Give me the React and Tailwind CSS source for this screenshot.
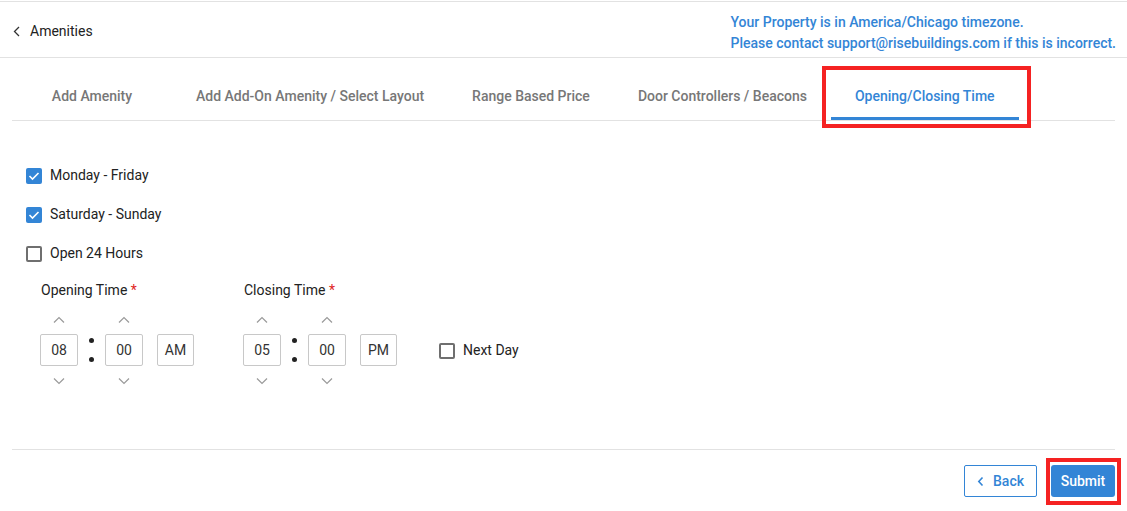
import { useState } from "react";

const BLUE = "#3385d6";

const Chevron = ({ dir = "up", className = "" }) => (
  <svg width="12" height="7" viewBox="0 0 12 7" className={className} fill="none">
    {dir === "up" ? (
      <path d="M1 6.5 L6 1.5 L11 6.5" stroke="#9a9a9a" strokeWidth="1.2" />
    ) : (
      <path d="M1 0.5 L6 5.5 L11 0.5" stroke="#9a9a9a" strokeWidth="1.2" />
    )}
  </svg>
);

const Check = ({ checked, label, onClick }) => (
  <div className="flex items-center h-[39px] cursor-pointer" onClick={onClick}>
    {checked ? (
      <span className="w-4 h-4 rounded-[2px] bg-[#3385d6] flex items-center justify-center">
        <svg width="12" height="10" viewBox="0 0 12 10" fill="none">
          <path d="M1.5 5 L4.5 8 L10.5 2" stroke="white" strokeWidth="1.6" />
        </svg>
      </span>
    ) : (
      <span className="w-4 h-4 rounded-[2px] border-2 border-[#6f6f6f]" />
    )}
    <span className="ml-[8px] text-[14px] text-[#222]">{label}</span>
  </div>
);

const Spin = ({ value }) => (
  <div className="flex flex-col items-center">
    <button className="h-5 w-[38px] flex items-center justify-center"><Chevron dir="up" /></button>
    <div className="mt-[5px] w-[38px] h-[32px] border border-[#c8c8c8] rounded-[2px] flex items-center justify-center text-[14px] text-[#333]">{value}</div>
    <button className="mt-[5px] h-5 w-[38px] flex items-center justify-center"><Chevron dir="down" /></button>
  </div>
);

const TimePicker = ({ label, h, m, ap }) => (
  <div>
    <div className="pl-px text-[14px] leading-5 text-[#222]">
      {label} <span className="text-[#e02424]">*</span>
    </div>
    <div className="mt-[9px] flex items-center">
      <Spin value={h} />
      <div className="w-[27px] flex flex-col items-center gap-[14px]">
        <span className="w-[5px] h-[5px] rounded-full bg-[#222]" />
        <span className="w-[5px] h-[5px] rounded-full bg-[#222]" />
      </div>
      <Spin value={m} />
      <div className="ml-[14px] w-[37px] h-[32px] border border-[#c8c8c8] rounded-[2px] flex items-center justify-center text-[14px] text-[#333]">{ap}</div>
    </div>
  </div>
);

const tabs = [
  "Add Amenity",
  "Add Add-On Amenity / Select Layout",
  "Range Based Price",
  "Door Controllers / Beacons",
  "Opening/Closing Time",
];

export default function App() {
  const [checks, setChecks] = useState({ week: true, weekend: true, allDay: false, nextDay: false });
  const toggle = (k) => setChecks((c) => ({ ...c, [k]: !c[k] }));

  return (
    <div className="w-[1127px] h-[511px] bg-white font-['Roboto',sans-serif] overflow-hidden">
      <div className="mt-px border-t border-[#e2e2e2]" />
      <div className="h-[56px] flex justify-between border-b border-[#e2e2e2]">
        <div className="flex items-center pl-[13px] pt-[3px]">
          <svg width="7" height="11" viewBox="0 0 7 11" fill="none">
            <path d="M6 1 L1.5 5.5 L6 10" stroke="#333" strokeWidth="1.3" />
          </svg>
          <span className="ml-[10px] text-[14px] text-[#222]">Amenities</span>
        </div>
        <div className="pt-[10px] pr-[11px] text-left text-[14px] leading-[21px] font-medium text-[#3385d6]">
          <div>Your Property is in America/Chicago timezone.</div>
          <div>Please contact support@risebuildings.com if this is incorrect.</div>
        </div>
      </div>

      <div className="mx-3 mt-[10px] flex border-b border-[#e2e2e2]">
        {tabs.map((t, i) => {
          const active = i === tabs.length - 1;
          return (
            <div
              key={t}
              className={
                "relative min-w-[160px] px-6 h-[52px] flex items-end justify-center pb-[11px] text-[14px] leading-5 font-medium border-b-[3px] " +
                (active ? "text-[#3385d6] border-[#3385d6]" : "text-[#777] border-transparent")
              }
            >
              {t}
              {active && (
                <div className="absolute -left-[9px] -right-[12px] -top-[2px] -bottom-[11px] border-4 border-[#f52222]" />
              )}
            </div>
          );
        })}
      </div>

      <div className="mx-3 pl-[14px] mt-[35px]">
        <Check checked={checks.week} label="Monday - Friday" onClick={() => toggle("week")} />
        <Check checked={checks.weekend} label="Saturday - Sunday" onClick={() => toggle("weekend")} />
        <Check checked={checks.allDay} label="Open 24 Hours" onClick={() => toggle("allDay")} />
      </div>

      <div className="ml-10 mt-[7px] flex items-start">
        <TimePicker label="Opening Time" h="08" m="00" ap="AM" />
        <div className="ml-[49px]">
          <TimePicker label="Closing Time" h="05" m="00" ap="PM" />
        </div>
        <div className="ml-[42px] mt-[51px]">
          <Check checked={checks.nextDay} label="Next Day" onClick={() => toggle("nextDay")} />
        </div>
      </div>

      <div className="mx-3 mt-[58px] border-t border-[#e2e2e2] pt-[15px] flex justify-end gap-[14px]">
        <button className="w-[73px] h-[32px] border border-[#3385d6] rounded-[2px] flex items-center justify-center gap-[9px] text-[14px] font-medium text-[#3385d6]">
          <svg width="7" height="11" viewBox="0 0 7 11" fill="none">
            <path d="M5.5 1.5 L1.8 5.5 L5.5 9.5" stroke={BLUE} strokeWidth="1.6" />
          </svg>
          Back
        </button>
        <div className="relative">
          <button className="w-[64px] h-[32px] rounded-[3px] bg-[#3385d6] text-white text-[14px] font-medium">Submit</button>
          <div className="absolute -left-[5px] -right-[6px] -top-[7px] -bottom-[8px] border-4 border-[#f52222]" />
        </div>
      </div>
    </div>
  );
}
